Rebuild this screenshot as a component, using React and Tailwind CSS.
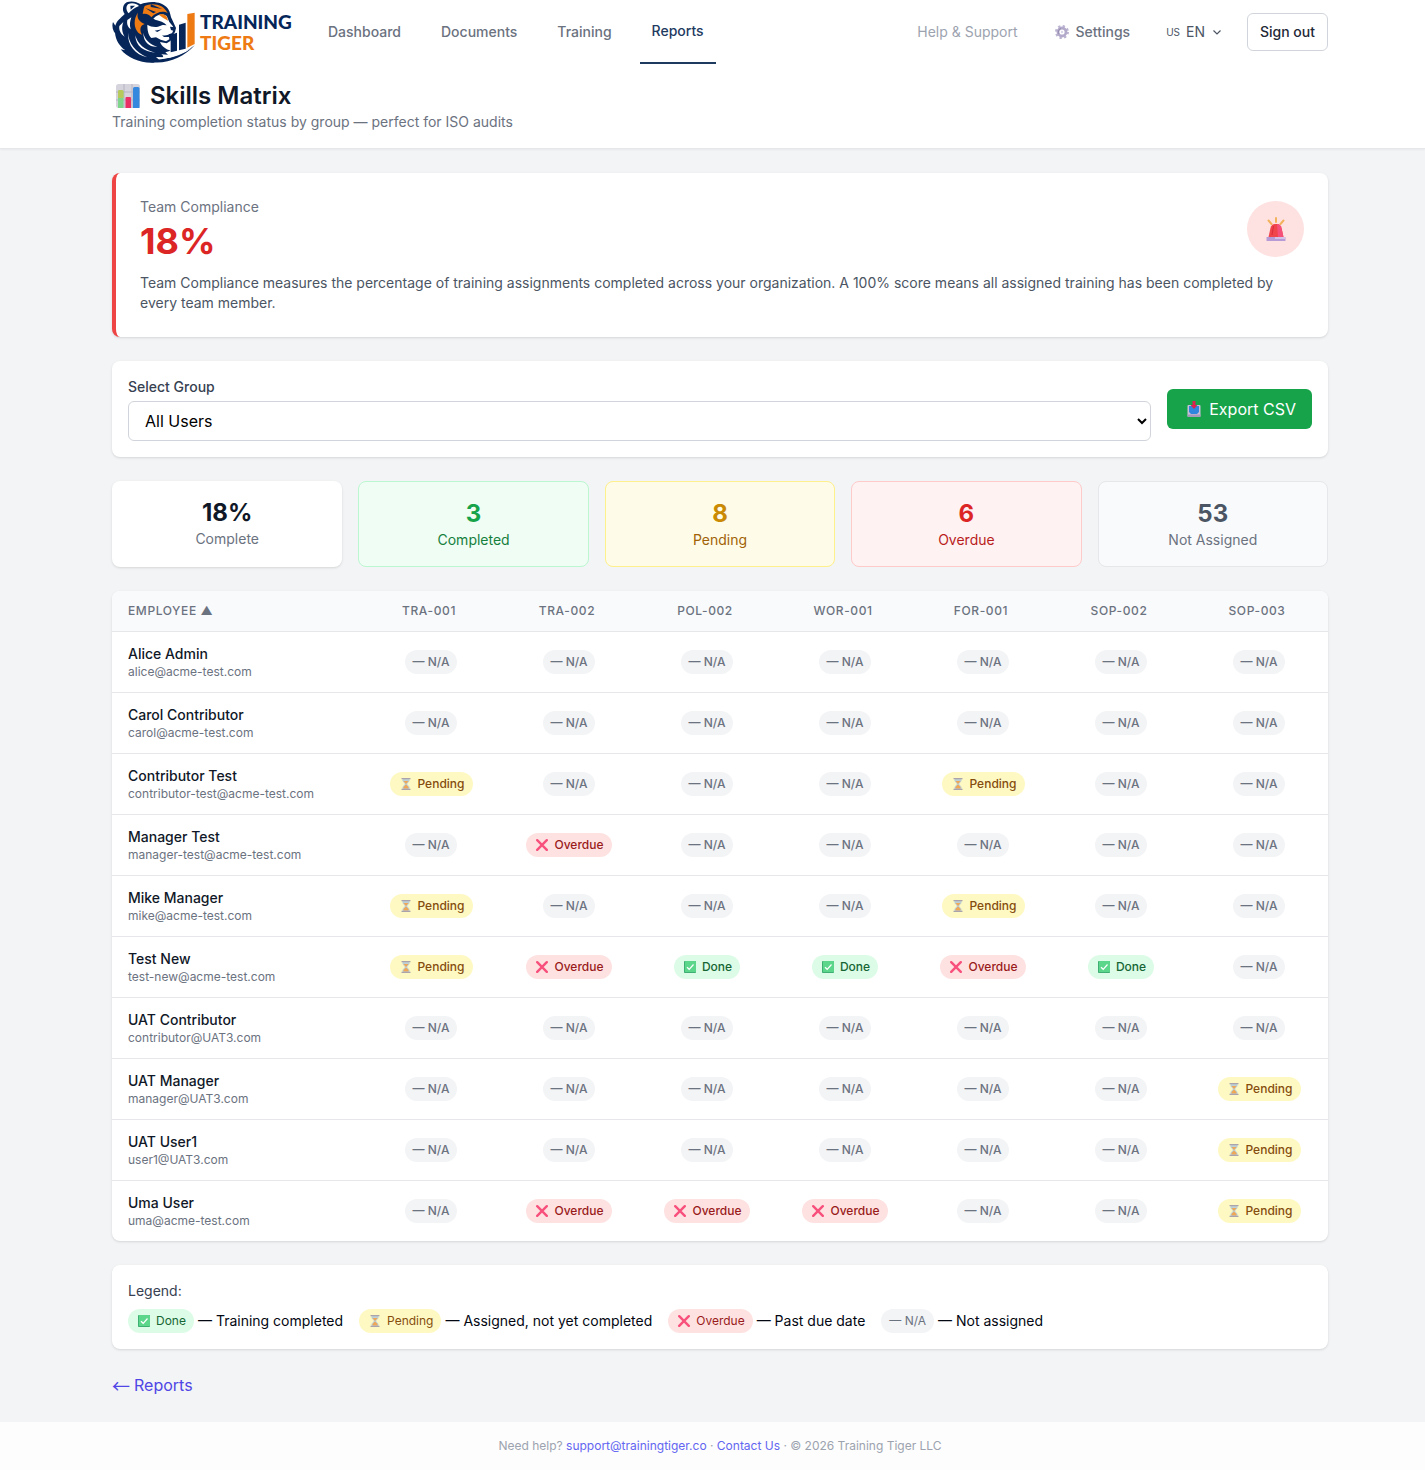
const NAV_LINKS = ['Dashboard', 'Documents', 'Training'];

const COURSES = ['TRA-001', 'TRA-002', 'POL-002', 'WOR-001', 'FOR-001', 'SOP-002', 'SOP-003'];

// n = not assigned, p = pending, o = overdue, d = done
const EMPLOYEES = [
  { name: 'Alice Admin', email: 'alice@acme-test.com', statuses: 'nnnnnnn' },
  { name: 'Carol Contributor', email: 'carol@acme-test.com', statuses: 'nnnnnnn' },
  { name: 'Contributor Test', email: 'contributor-test@acme-test.com', statuses: 'pnnnpnn' },
  { name: 'Manager Test', email: 'manager-test@acme-test.com', statuses: 'nonnnnn' },
  { name: 'Mike Manager', email: 'mike@acme-test.com', statuses: 'pnnnpnn' },
  { name: 'Test New', email: 'test-new@acme-test.com', statuses: 'poddodn' },
  { name: 'UAT Contributor', email: 'contributor@UAT3.com', statuses: 'nnnnnnn' },
  { name: 'UAT Manager', email: 'manager@UAT3.com', statuses: 'nnnnnnp' },
  { name: 'UAT User1', email: 'user1@UAT3.com', statuses: 'nnnnnnp' },
  { name: 'Uma User', email: 'uma@acme-test.com', statuses: 'nooonnp' },
];

const STATS = [
  { value: '18%', label: 'Complete', box: 'bg-white shadow', number: 'text-gray-900', text: 'text-[#6b7280]' },
  { value: '3', label: 'Completed', box: 'bg-[#f0fdf4] border border-[#bbf7d0]', number: 'text-[#16a34a]', text: 'text-[#15803d]' },
  { value: '8', label: 'Pending', box: 'bg-[#fefce8] border border-[#fef08a]', number: 'text-[#ca8a04]', text: 'text-[#a16207]' },
  { value: '6', label: 'Overdue', box: 'bg-[#fef2f2] border border-[#fecaca]', number: 'text-[#dc2626]', text: 'text-[#b91c1c]' },
  { value: '53', label: 'Not Assigned', box: 'bg-[#f9fafb] border border-[#e5e7eb]', number: 'text-[#4b5563]', text: 'text-[#6b7280]' },
];

function TigerMark() {
  return (
    <svg viewBox="36 0 252 192" className="h-16 w-[84px] shrink-0" aria-hidden="true">
      {/* head and mane */}
      <path
        fill="#06265a"
        d="M80 7C92 2 110 4 122 13C146 2 186 2 204 26C212 37 210 48 217 60L228 84L225 96L216 108L212 122L200 130L180 126C186 140 198 148 212 152L196 157L204 164L184 163L194 172L168 171L178 180L160 188C122 190 82 174 62 148L76 151C58 138 47 120 45 98L54 108C40 98 34 82 39 66L46 77C50 62 62 54 74 42C65 30 68 14 80 7Z"
      />
      {/* ear */}
      <path fill="#fff" d="M84 13C96 7 109 11 117 18C103 23 93 31 86 40C78 32 77 20 84 13Z" />
      <path fill="#06265a" d="M91 17L105 17L92 29Z" />
      {/* forehead */}
      <path fill="#ee7a14" d="M134 18C158 8 190 12 203 40C190 31 170 36 154 52C148 44 140 40 128 42C130 34 130 26 134 18Z" />
      <path fill="#06265a" d="M152 12L186 27L152 21ZM136 24L168 36L160 40Z" />
      <path fill="#ee7a14" d="M114 38C108 54 120 66 134 72C120 76 118 90 126 104C104 98 96 62 114 38Z" />
      {/* face */}
      <path fill="#fff" d="M160 56C172 42 190 40 200 48L208 66L218 78L222 86L216 100L206 103L208 118L198 124L182 119L168 112L154 114C144 104 142 88 142 74C152 80 162 82 174 80L190 74C180 66 170 60 160 56Z" />
      <path fill="#ee7a14" d="M176 44C186 40 196 43 201 51L204 62L190 54Z" />
      <path fill="#06265a" d="M166 60C180 62 192 66 200 76L182 74ZM210 80L226 82L222 93L213 90ZM164 92L186 88L172 96ZM186 106C196 108 208 105 216 100L206 111L192 111Z" />
      {/* cheek ruff */}
      <path fill="#fff" d="M130 98C134 118 148 132 172 140C150 142 130 128 130 98ZM106 106C112 132 134 150 166 158C132 156 106 138 106 106ZM84 98C86 130 106 156 142 172C106 164 82 136 84 98Z" />
      <path fill="#fff" d="M82 60L94 52C90 64 88 74 92 88C82 80 80 70 82 60ZM58 78L70 66C64 82 66 96 74 110C62 102 56 90 58 78Z" />
      {/* chart bars */}
      <path fill="#06265a" d="M212 104L231 98V152L212 157ZM237 74L257 68V146L237 151Z" />
      <path fill="#ee7a14" d="M262 42L284 38V132L262 143Z" />
      <path fill="#06265a" d="M150 180C196 181 246 166 284 136C252 172 200 194 150 186Z" />
      <path fill="#fff" d="M190 168C224 166 254 156 280 140C252 162 220 174 186 176Z" />
    </svg>
  );
}

function Logo() {
  return (
    <a href="#home" className="flex h-16 w-[180px] shrink-0 items-center gap-1" aria-label="Training Tiger">
      <TigerMark />
      <span className="font-[Lato,sans-serif] text-[19px] leading-[21px] font-black">
        <span className="block text-[#06265a]">TRAINING</span>
        <span className="block text-[#ee7a14]">TIGER</span>
      </span>
    </a>
  );
}

function GearIcon() {
  return (
    <svg viewBox="0 0 16 16" className="h-4 w-4" aria-hidden="true">
      <circle cx="8" cy="8" r="5.9" fill="none" stroke="#bdb4d2" strokeWidth="2.2" strokeDasharray="2.3 2.33" />
      <circle cx="8" cy="8" r="4" fill="none" stroke="#b3aacb" strokeWidth="2.8" />
      <path d="M5 10A3.6 3.6 0 0 1 7 4.5" fill="none" stroke="#8f86a8" strokeWidth="0.9" />
      <circle cx="8" cy="8" r="1.2" fill="#dcd6e8" />
    </svg>
  );
}

function ChartIcon() {
  return (
    <svg viewBox="0 0 24 24" className="h-6 w-6" aria-hidden="true">
      <rect width="24" height="24" rx="2.5" fill="#d5d3dc" />
      <path d="M0 8H24M0 16H24M8 0V24M16 0V24" stroke="#b8b4c4" strokeWidth="1" />
      <path d="M2 7.5Q2 6 3.5 6H6Q7.5 6 7.5 7.5V24H2Z" fill="#7ed58b" />
      <path d="M2 7.5Q2 6 3.5 6H6Q7.5 6 7.5 7.5V14H2Z" fill="#b8c95c" />
      <path d="M9.5 14Q9.5 13 10.5 13H14Q15 13 15 14V24H9.5Z" fill="#ea2f64" />
      <path d="M17 4.5Q17 3 18.5 3H22Q23.5 3 23.5 4.5V24H17Z" fill="#3488de" />
    </svg>
  );
}

function SirenIcon() {
  return (
    <svg viewBox="0 0 20 24" className="h-6 w-5" aria-hidden="true">
      <path d="M10 1V5M2.5 3.5L5.5 7M17.5 3.5L14.5 7" stroke="#f3b35c" strokeWidth="2" strokeLinecap="round" />
      <path d="M2.5 20L4.5 11Q5.5 7 9 7H11Q14.5 7 15.5 11L17.5 20Z" fill="#f0454a" />
      <path d="M11 7Q14.5 7 15.5 11L17.5 20H12Z" fill="#f5507a" />
      <path d="M7.5 9L6 18" stroke="#d92c3c" strokeWidth="1" />
      <rect x="0.5" y="20" width="19" height="4" rx="0.6" fill="#b79bd6" />
      <rect x="9" y="20" width="10" height="2" fill="#d3c2e8" />
    </svg>
  );
}

function InboxIcon() {
  return (
    <svg viewBox="0 0 14 16" className="h-4 w-3.5" aria-hidden="true">
      <rect x="0.5" y="4" width="13" height="12" rx="1" fill="#c9bfd8" />
      <path d="M2 5H12V11L10 13H4L2 11Z" fill="#2f86dc" />
      <path d="M0.5 13.5H13.5V15Q13.5 16 12.5 16H1.5Q0.5 16 0.5 15Z" fill="#a69abb" />
      <path d="M5.5 0H8.5V4H10.5L7 8L3.5 4H5.5Z" fill="#dc2050" />
    </svg>
  );
}

function HourglassIcon() {
  return (
    <svg viewBox="0 0 12 12" className="h-3 w-3" aria-hidden="true">
      <path d="M2.5 1V3L5 6L2.5 9V11H9.5V9L7 6L9.5 3V1Z" fill="#bcd0d6" />
      <path d="M3.5 3H8.5L6 6ZM3.5 10.5V9L6 6.5L8.5 9V10.5Z" fill="#efa655" />
      <path d="M1.5 0.7H10.5M1.5 11.3H10.5" stroke="#aaa3ab" strokeWidth="1.3" />
    </svg>
  );
}

function CrossIcon() {
  return (
    <svg viewBox="0 0 12 12" className="h-3 w-3" aria-hidden="true">
      <path d="M1.2 1.2L10.8 10.8M10.8 1.2L1.2 10.8" stroke="#f8507c" strokeWidth="2.4" strokeLinecap="round" />
    </svg>
  );
}

function CheckIcon() {
  return (
    <svg viewBox="0 0 12 12" className="h-3 w-3" aria-hidden="true">
      <rect width="12" height="12" rx="0.8" fill="#3fae72" />
      <rect x="1" width="11" height="11" rx="0.6" fill="#5bd68b" />
      <path d="M3 6.2L5.2 8.3L9.5 3.5" fill="none" stroke="#fff" strokeWidth="1.2" />
    </svg>
  );
}

const STATUS = {
  n: { label: '— N/A', style: 'px-2 bg-[#f3f4f6] text-[#6b7280]', icon: null },
  p: { label: 'Pending', style: 'pl-2.5 pr-2 bg-[#fef9c3] text-[#854d0e]', icon: <HourglassIcon /> },
  o: { label: 'Overdue', style: 'pl-2.5 pr-2 bg-[#fee2e2] text-[#991b1b]', icon: <CrossIcon /> },
  d: { label: 'Done', style: 'pl-2.5 pr-2 bg-[#dcfce7] text-[#166534]', icon: <CheckIcon /> },
};

function Badge({ status, weight = 'font-medium' }) {
  const { label, style, icon } = STATUS[status];
  return (
    <span className={`inline-flex items-center gap-1.5 rounded-full py-1 text-xs whitespace-nowrap ${weight} ${style}`}>
      {icon}
      {label}
    </span>
  );
}

function TopNav() {
  return (
    <nav className="flex h-16 items-center justify-between pr-[97px] pl-28 text-sm font-medium">
      <div className="flex items-center gap-6">
        <Logo />
        <div className="flex h-16 items-stretch gap-4">
          {NAV_LINKS.map((link) => (
            <a key={link} href={`#${link.toLowerCase()}`} className="flex items-center px-3 text-[#6b7280]">
              {link}
            </a>
          ))}
          <a href="#reports" className="flex items-center border-b-2 border-[#1e3a5f] px-3 text-[#1e3a5f]">
            Reports
          </a>
        </div>
      </div>
      <div className="flex items-center">
        <a href="#help" className="px-3 font-normal text-[#9ca3af]">Help &amp; Support</a>
        <a href="#settings" className="ml-3 flex items-center gap-1.5 px-3 text-[#6b7280]">
          <GearIcon />
          Settings
        </a>
        <button type="button" className="ml-3 flex items-center gap-1.5 px-3 font-normal text-[#4b5563]">
          <span className="text-[10px]">US</span>
          <span>EN</span>
          <svg viewBox="0 0 12 12" className="h-3 w-3" fill="none" stroke="currentColor" strokeWidth="1.2" aria-hidden="true">
            <path d="M2.5 4.5L6 8L9.5 4.5" />
          </svg>
        </button>
        <button type="button" className="ml-3 rounded-md border border-[#d1d5db] bg-white px-3 py-2 text-[#1f2937]">
          Sign out
        </button>
      </div>
    </nav>
  );
}

function SkillsTable() {
  return (
    <div className="mt-6 overflow-hidden rounded-lg bg-white shadow">
      <table className="w-full table-fixed">
        <colgroup>
          <col className="w-[250px]" />
          {COURSES.map((course) => (
            <col key={course} />
          ))}
        </colgroup>
        <thead className="border-b border-gray-200 bg-[#f9fafb] text-xs text-[#6b7280] uppercase">
          <tr>
            <th className="px-4 py-3 text-left font-medium tracking-wider">Employee ▲</th>
            {COURSES.map((course) => (
              <th key={course} className="py-3 pr-5 pl-4 text-center font-medium tracking-wider">
                {course}
              </th>
            ))}
          </tr>
        </thead>
        <tbody className="divide-y divide-gray-200">
          {EMPLOYEES.map((employee) => (
            <tr key={employee.email}>
              <td className="px-4 py-3">
                <div className="text-sm font-medium text-gray-900">{employee.name}</div>
                <div className="text-xs text-[#6b7280]">{employee.email}</div>
              </td>
              {COURSES.map((course, i) => (
                <td key={course} className="px-4 py-3 text-center align-middle text-xs">
                  <Badge status={employee.statuses[i]} />
                </td>
              ))}
            </tr>
          ))}
        </tbody>
      </table>
    </div>
  );
}

function LegendItem({ status, text }) {
  return (
    <div className="flex items-center gap-1">
      <Badge status={status} weight="font-normal" />
      <span>{text}</span>
    </div>
  );
}

export default function App() {
  return (
    <div className="min-h-screen bg-[#f3f4f6] font-[Inter,sans-serif] text-gray-950">
      <header className="border-b border-gray-200 bg-white shadow-xs">
        <TopNav />
        <div className="py-4 pr-[97px] pl-28">
          <h1 className="flex items-center gap-2.5 pl-1 text-2xl font-semibold text-gray-900">
            <ChartIcon />
            Skills Matrix
          </h1>
          <p className="text-sm text-[#6b7280]">Training completion status by group — perfect for ISO audits</p>
        </div>
      </header>

      <main className="py-6 pr-[97px] pl-28">
        <section className="rounded-lg border-l-4 border-[#ef4444] bg-white p-6 shadow">
          <div className="flex items-center justify-between">
            <div>
              <h2 className="text-sm text-[#6b7280]">Team Compliance</h2>
              <p className="mt-1 text-4xl font-bold text-[#dc2626]">18%</p>
            </div>
            <div className="flex h-14 w-[57px] items-center justify-center rounded-full bg-[#fee2e2]">
              <SirenIcon />
            </div>
          </div>
          <p className="mt-3 text-sm text-[#4b5563]">
            Team Compliance measures the percentage of training assignments completed across your organization. A 100%
            score means all assigned training has been completed by every team member.
          </p>
        </section>

        <section className="mt-6 flex items-center gap-4 rounded-lg bg-white p-4 shadow">
          <div className="flex-1">
            <label htmlFor="group" className="block text-sm font-medium text-[#374151]">Select Group</label>
            <select id="group" className="mt-1 block h-10 w-full rounded-md border border-[#d1d5db] bg-white px-3 text-base text-black">
              <option>All Users</option>
            </select>
          </div>
          <button type="button" className="flex h-10 items-center gap-2 rounded-md bg-[#16a34a] pr-4 pl-5 text-base text-white">
            <InboxIcon />
            Export CSV
          </button>
        </section>

        <section className="mt-6 grid grid-cols-5 gap-4">
          {STATS.map((stat) => (
            <div key={stat.label} className={`rounded-lg p-4 text-center ${stat.box}`}>
              <div className={`text-2xl font-bold ${stat.number}`}>{stat.value}</div>
              <div className={`text-sm ${stat.text}`}>{stat.label}</div>
            </div>
          ))}
        </section>

        <SkillsTable />

        <section className="mt-6 rounded-lg bg-white p-4 text-sm shadow">
          <h3 className="text-[#374151]">Legend:</h3>
          <div className="mt-2 flex flex-wrap gap-4">
            <LegendItem status="d" text="— Training completed" />
            <LegendItem status="p" text="— Assigned, not yet completed" />
            <LegendItem status="o" text="— Past due date" />
            <LegendItem status="n" text="— Not assigned" />
          </div>
        </section>

        <a href="#reports" className="mt-6 flex h-6 w-fit items-center gap-1 text-base text-[#4f46e5]">
          <span className="font-['Noto_Sans_CJK_SC',sans-serif] text-lg leading-6">←</span>
          Reports
        </a>
      </main>

      <footer className="border-t border-gray-100 bg-[#fdfdfd] py-4 pr-[97px] pl-28 text-center text-xs text-[#9ca3af]">
        Need help? <a href="mailto:support@trainingtiger.co" className="text-[#6366f1]">support@trainingtiger.co</a> ·{' '}
        <a href="#contact" className="text-[#6366f1]">Contact Us</a> · © 2026 Training Tiger LLC
      </footer>
    </div>
  );
}
